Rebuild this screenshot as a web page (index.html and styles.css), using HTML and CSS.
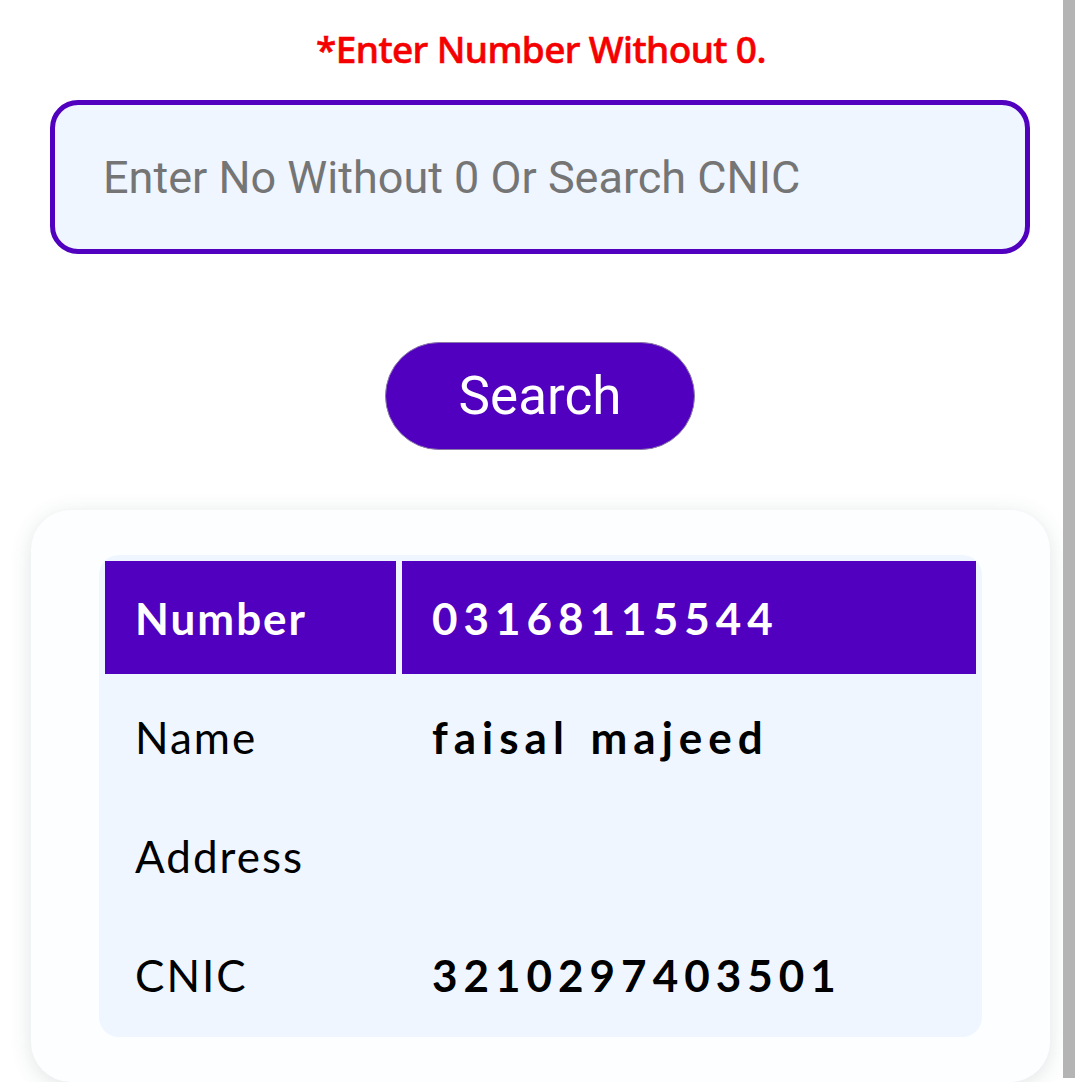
FILE: index.html
```html
<!DOCTYPE html>
<html lang="en">
<head>
    <meta charset="UTF-8">
    <meta name="viewport" content="width=1080">
    <title>Number Search</title>
    <link rel="stylesheet" href="styles.css">
</head>
<body>
    <div class="container">
        <p class="notice">*Enter Number Without 0.</p>
        <div class="search-box">
            <input type="text" id="query" placeholder="Enter No Without 0 Or Search CNIC">
        </div>
        <div class="actions">
            <button class="search-btn">Search</button>
        </div>
        <div class="card">
            <table class="result">
                <tr class="head">
                    <th class="label">Number</th>
                    <th class="value">03168115544</th>
                </tr>
                <tr>
                    <td class="label">Name</td>
                    <td class="value">faisal majeed</td>
                </tr>
                <tr>
                    <td class="label">Address</td>
                    <td class="value"></td>
                </tr>
                <tr>
                    <td class="label">CNIC</td>
                    <td class="value">3210297403501</td>
                </tr>
            </table>
        </div>
    </div>
    <div class="scrollbar"></div>
</body>
</html>
```

FILE: styles.css
```css
body {
    margin: 0;
    padding: 0;
    background: #fff;
    font-family: 'Lato', sans-serif;
    overflow: hidden;
}
.container {
    width: 1080px;
    display: flex;
    flex-direction: column;
    align-items: center;
}
.notice {
    margin: 26px 0 0 2px;
    color: #f50000;
    font-family: 'Noto Sans', sans-serif;
    font-weight: 500;
    font-size: 37px;
    letter-spacing: -0.6px;
    line-height: 46px;
    -webkit-text-stroke: 0.6px #f50000;
}
.search-box {
    margin-top: 28px;
    width: 980px;
}
.search-box input {
    box-sizing: border-box;
    display: block;
    width: 100%;
    height: 154px;
    border: 5px solid #5000be;
    border-radius: 28px;
    background: #eff6ff;
    padding: 0 48px;
    font-family: 'Roboto', sans-serif;
    font-size: 45px;
    color: #333;
    outline: none;
}
.search-box input::placeholder {
    color: #757575;
}
.actions {
    margin-top: 88px;
}
.search-btn {
    display: block;
    width: 310px;
    height: 108px;
    border: 1px solid #8a7aa8;
    border-radius: 54px;
    background: #5000be;
    color: #fff;
    font-family: 'Roboto', sans-serif;
    font-size: 53px;
    cursor: pointer;
}
.card {
    box-sizing: border-box;
    margin: 60px 0 0 1px;
    width: 1019px;
    padding: 45px 68px;
    background: #fdfeff;
    border-radius: 40px;
    box-shadow: 0 4px 22px rgba(40, 80, 80, 0.14);
}
.result {
    width: 100%;
    border-spacing: 6px;
    background: #eff6ff;
    border-radius: 20px;
}
.result td,
.result th {
    height: 113px;
    padding: 0 0 0 30px;
    text-align: left;
    font-size: 44px;
    color: #000;
}
.result .label {
    width: 261px;
}
.result td.label {
    font-weight: 400;
    letter-spacing: 2px;
}
.result .value {
    font-weight: 700;
    letter-spacing: 6px;
    word-spacing: 4px;
}
.result .head th {
    background: #5000be;
    color: #fff;
}
.result .head th.label {
    font-weight: 700;
    letter-spacing: 2px;
}
.scrollbar {
    position: fixed;
    top: 0;
    right: 5px;
    width: 12px;
    height: 1078px;
    background: #b4b4b4;
}
```
